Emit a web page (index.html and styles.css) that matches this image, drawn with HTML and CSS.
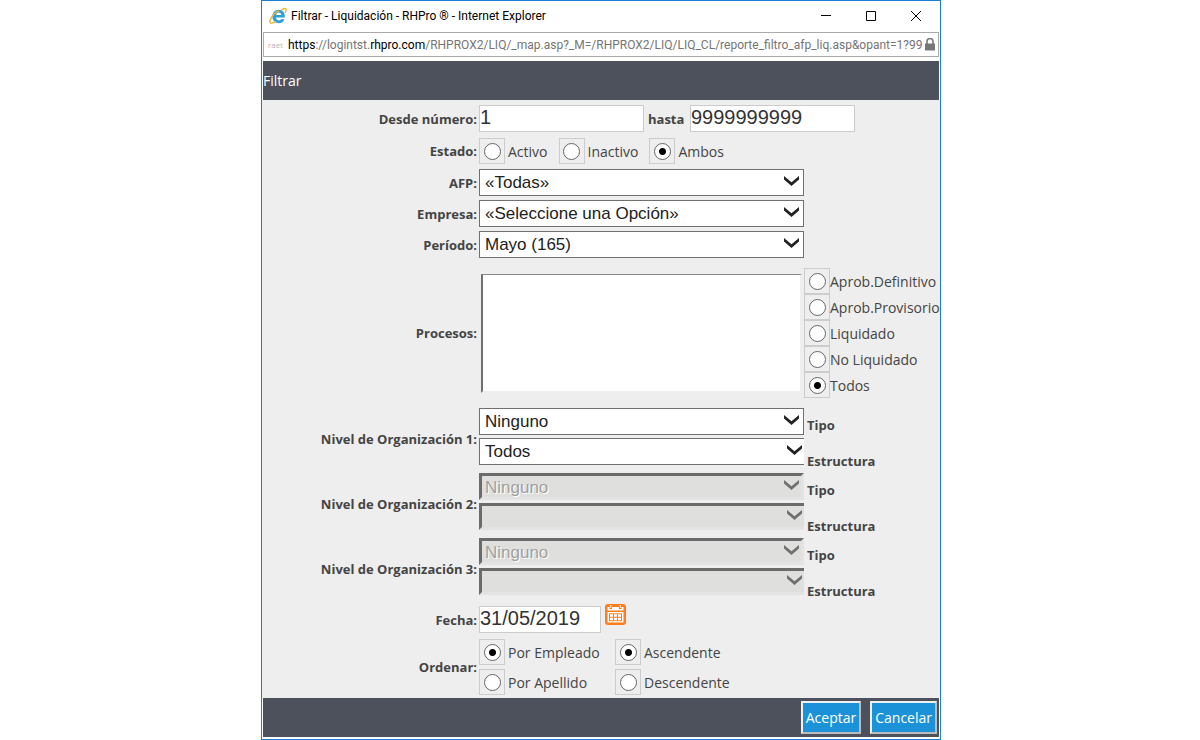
FILE: index.html
```
<!DOCTYPE html>
<html lang="es">
<head>
<meta charset="utf-8">
<title>Filtrar - Liquidación - RHPro</title>
<link rel="stylesheet" href="styles.css">
</head>
<body>
<svg class="defs" aria-hidden="true">
  <symbol id="chevron" viewBox="0 0 15 10"><path d="M0 0 L7.5 6.3 L15 0 V3.6 L7.5 10 L0 3.6 Z" fill="currentColor"/></symbol>
</svg>
<div class="window">
  <header class="titlebar">
    <svg class="ie" viewBox="0 0 18 18" aria-hidden="true">
      <path d="M9.8 2.8 C13.8 2.8 16.2 5.8 15.8 10.6 H7 C7.2 12.4 8.3 13.4 9.9 13.4 C10.9 13.4 11.6 13 12 12.3 H15.5 C14.6 14.8 12.6 16.2 9.8 16.2 C6 16.2 3.4 13.5 3.4 9.6 C3.4 5.6 6 2.8 9.8 2.8 Z" fill="#2f9fe0"/>
      <path d="M7.1 8.1 C7.4 6.5 8.4 5.6 9.8 5.6 C11.2 5.6 12.2 6.6 12.3 8.1 Z" fill="#fff"/>
      <path d="M12.5 3 C15 1.2 17 1 17.1 2.5 C17.2 3.4 16.7 4.6 16 5.6 M10 3.6 C6.5 5.4 2.8 9 1.4 12.4 C0 15.8 1.3 17.6 6.5 14.7" fill="none" stroke="#edb52d" stroke-width="1.4"/>
    </svg>
    <h1 class="caption">Filtrar - Liquidación - RHPro ® - Internet Explorer</h1>
    <button class="wbtn" type="button" aria-label="Minimizar"><svg viewBox="0 0 12 12"><path d="M1 5.5H11"/></svg></button>
    <button class="wbtn" type="button" aria-label="Maximizar"><svg viewBox="0 0 12 12"><path d="M1.5 1.5H10.5V10.5H1.5Z"/></svg></button>
    <button class="wbtn" type="button" aria-label="Cerrar"><svg viewBox="0 0 12 12"><path d="M1 1L11 11M11 1L1 11"/></svg></button>
  </header>
  <div class="address">
    <span class="favicon"><span class="fr">r</span><span class="fa">a</span><span class="fe">e</span><span class="ft">t</span></span>
    <span class="url"><b>https</b>://logintst.<b>rhpro.com</b>/RHPROX2/LIQ/_map.asp?_M=/RHPROX2/LIQ/LIQ_CL/reporte_filtro_afp_liq.asp&amp;opant=1?99</span>
    <svg class="lock" viewBox="0 0 10 13" aria-hidden="true"><path d="M2 6V3.5A3 3 0 0 1 8 3.5V6" fill="none" stroke="#777" stroke-width="1.6"/><path d="M0 5.5H10V12.5H0Z" fill="#777"/></svg>
  </div>
  <h2 class="bar">Filtrar</h2>
  <form class="form">
    <div class="row row-num">
      <label class="name" for="desde">Desde número:</label>
      <div class="line">
        <input class="text" id="desde" type="text" value="1">
        <label class="until" for="hasta">hasta</label>
        <input class="text" id="hasta" type="text" value="9999999999">
      </div>
    </div>
    <div class="row row-state">
      <span class="name">Estado:</span>
      <div class="line states">
        <label class="opt"><input type="radio" name="estado">Activo</label>
        <label class="opt"><input type="radio" name="estado">Inactivo</label>
        <label class="opt"><input type="radio" name="estado" checked>Ambos</label>
      </div>
    </div>
    <div class="row">
      <label class="name" for="afp">AFP:</label>
      <div class="pick"><select id="afp"><option>«Todas»</option></select><svg class="chev"><use href="#chevron"/></svg></div>
    </div>
    <div class="row">
      <label class="name" for="empresa">Empresa:</label>
      <div class="pick"><select id="empresa"><option>«Seleccione una Opción»</option></select><svg class="chev"><use href="#chevron"/></svg></div>
    </div>
    <div class="row">
      <label class="name" for="periodo">Período:</label>
      <div class="pick"><select id="periodo"><option>Mayo (165)</option></select><svg class="chev"><use href="#chevron"/></svg></div>
    </div>
    <div class="row row-proc">
      <label class="name" for="procesos">Procesos:</label>
      <div class="line">
        <select class="list" id="procesos" multiple></select>
        <div class="stack">
          <label class="opt"><input type="radio" name="aprob">Aprob.Definitivo</label>
          <label class="opt"><input type="radio" name="aprob">Aprob.Provisorio</label>
          <label class="opt"><input type="radio" name="aprob">Liquidado</label>
          <label class="opt"><input type="radio" name="aprob">No Liquidado</label>
          <label class="opt"><input type="radio" name="aprob" checked>Todos</label>
        </div>
      </div>
    </div>
    <div class="row row-level">
      <span class="name">Nivel de Organización 1:</span>
      <div class="level">
        <div class="picks">
          <div class="pick"><select id="tipo1"><option>Ninguno</option></select><svg class="chev"><use href="#chevron"/></svg></div>
          <div class="pick cut"><select id="estr1"><option>Todos</option></select><svg class="chev"><use href="#chevron"/></svg></div>
        </div>
        <div class="sides"><label for="tipo1">Tipo</label><label for="estr1">Estructura</label></div>
      </div>
    </div>
    <div class="row row-level">
      <span class="name">Nivel de Organización 2:</span>
      <div class="level">
        <div class="picks">
          <div class="pick"><select id="tipo2" disabled><option>Ninguno</option></select><svg class="chev"><use href="#chevron"/></svg></div>
          <div class="pick cut"><select id="estr2" disabled><option></option></select><svg class="chev"><use href="#chevron"/></svg></div>
        </div>
        <div class="sides"><label for="tipo2">Tipo</label><label for="estr2">Estructura</label></div>
      </div>
    </div>
    <div class="row row-level">
      <span class="name">Nivel de Organización 3:</span>
      <div class="level">
        <div class="picks">
          <div class="pick"><select id="tipo3" disabled><option>Ninguno</option></select><svg class="chev"><use href="#chevron"/></svg></div>
          <div class="pick cut"><select id="estr3" disabled><option></option></select><svg class="chev"><use href="#chevron"/></svg></div>
        </div>
        <div class="sides"><label for="tipo3">Tipo</label><label for="estr3">Estructura</label></div>
      </div>
    </div>
    <div class="row row-date">
      <label class="name" for="fecha">Fecha:</label>
      <div class="line">
        <input class="text date" id="fecha" type="text" value="31/05/2019">
        <button class="cal" type="button" aria-label="Calendario">
          <svg viewBox="0 0 21 21"><rect width="21" height="21" rx="3" fill="#ff7d1a"/><path d="M2.5 3H4.5V5H7V3H14V5H16.5V3H18.5V6.5H2.5Z" fill="#fff"/><path d="M5.75 1V4M15.25 1V4" stroke="#fff" stroke-width=".9"/><path d="M2.5 8H18.5V18.5H2.5Z" fill="#fff"/><path d="M4 9.3H17V17.2H4Z" fill="#ff7d1a"/><path d="M5 10.3h3v2.5H5zM9 10.3h3v2.5H9zM13 10.3h3v2.5h-3zM5 13.8h3v2.5H5zM9 13.8h3v2.5H9zM13 13.8h3v2.5h-3z" fill="#fff"/></svg>
        </button>
      </div>
    </div>
    <div class="row row-order">
      <span class="name">Ordenar:</span>
      <div class="orders">
        <label class="opt"><input type="radio" name="orden" checked>Por Empleado</label>
        <label class="opt"><input type="radio" name="sentido" checked>Ascendente</label>
        <label class="opt"><input type="radio" name="orden">Por Apellido</label>
        <label class="opt"><input type="radio" name="sentido">Descendente</label>
      </div>
    </div>
  </form>
  <footer class="actions">
    <button class="action" type="button">Aceptar</button>
    <button class="action" type="button">Cancelar</button>
  </footer>
</div>
</body>
</html>
```
FILE: styles.css
```
* { box-sizing: border-box; }
body { margin: 0; padding-left: 2px; background: #fff; font-family: "Open Sans", "Noto Sans", sans-serif; font-size: 14px; color: #444; }
h1, h2 { margin: 0; font-weight: 400; }
button { font-family: inherit; cursor: pointer; }
.defs { position: absolute; width: 0; height: 0; }
.window { display: flex; flex-direction: column; max-width: 680px; min-height: 100vh; margin: 0 auto; border: 1px solid #1a7fd4; background: #fff; }

.titlebar { display: flex; align-items: center; height: 29px; padding: 0 2px 0 7px; }
.ie { width: 18px; height: 18px; margin-right: 4px; }
.caption { flex: 1; font-family: Roboto, sans-serif; font-size: 12px; color: #000; white-space: nowrap; }
.wbtn { display: flex; align-items: center; justify-content: center; width: 45px; height: 28px; padding: 0; border: 0; background: none; }
.wbtn svg { width: 12px; height: 12px; fill: none; stroke: #000; }

.address { display: flex; align-items: center; height: 25px; margin: 2px 1px 0; padding: 0 3px 0 4px; border: 1px solid #aaa; }
.favicon { width: 20px; font-size: 8px; line-height: 12px; }
.fr { color: #e4a0a8; }
.fa { color: #c8a0c8; }
.fe { color: #90c8a8; }
.ft { color: #e0b0a0; }
.url { flex: 1; overflow: hidden; white-space: nowrap; font-family: Roboto, sans-serif; font-size: 12px; color: #757575; }
.url b { font-weight: 400; color: #000; }
.lock { flex: none; width: 10px; height: 13px; margin-left: 2px; }

.bar { height: 39px; margin: 4px 1px 0; line-height: 39px; background: #4d515c; color: #fff; font-size: 14px; }

.form { flex: 1; display: flex; flex-direction: column; padding: 5px 0 2px; background: #eee; }
.row { display: grid; grid-template-columns: 215px 1fr; column-gap: 2px; align-items: center; margin-bottom: 4px; }
.row-num { margin-bottom: 6px; }
.row-state { margin-bottom: 5px; }
.row-proc { margin: 6px 0 10px; }
.row-level { margin-bottom: 2px; }
.row-date { margin: 3px 0 6px; }
.row-order { margin-bottom: 0; }
.name { text-align: right; font-size: 13px; font-weight: 700; }
.row-level .name { padding-bottom: 2px; }
.line { display: flex; align-items: center; }

.text { width: 165px; height: 27px; padding: 0 0 2px; border: 1px solid #ccc; background: #fff; color: #333; font: 20px "Liberation Sans", sans-serif; }
.until { width: 46px; padding-left: 4px; font-size: 13px; font-weight: 700; }
.date { width: 122px; }
.cal { align-self: flex-start; width: 21px; height: 21px; margin: -2px 0 0 4px; padding: 0; border: 0; background: none; }
.cal svg { display: block; }

.opt { display: flex; align-items: center; gap: 3px; height: 26px; }
.opt input { appearance: none; display: grid; place-items: center; flex: none; width: 26px; height: 26px; margin: 0; border: 1px solid #ccc; }
.opt input::before { content: ""; width: 15px; height: 15px; border: 1px solid #666; border-radius: 50%; background: #fff; }
.opt input:checked::before { background: radial-gradient(circle, #000 3px, #fff 4px); }
.states { gap: 11px; }
.stack { margin-left: 2px; }
.stack .opt { gap: 0; }
.orders { display: grid; grid-template-columns: 136px 1fr; row-gap: 4px; }

.pick { position: relative; width: 325px; height: 27px; }
.pick select { appearance: none; width: 100%; height: 100%; padding: 0 5px; border: 1px solid #707070; border-radius: 0; background: #fff; color: #222; font: 17px "Liberation Sans", sans-serif; }
.chev { position: absolute; top: 7px; right: 5px; width: 15px; height: 10px; color: #222; pointer-events: none; }
.cut .chev { right: 2px; }
.cut select { border-right: 0; }
.pick select:disabled { padding: 2px 3px 0; border: 3px solid; border-color: #6b6b6b #e3e3e3 #e3e3e3 #6b6b6b; background: #dfdfde; color: #a0a0a0; opacity: 1; text-shadow: 1px 1px 0 #fff; }
.cut select:disabled { border-right: 0; }
select:disabled + .chev { color: #707070; }
.list { width: 321px; height: 119px; margin-left: 2px; padding: 0; border: 2px solid; border-top-width: 1px; border-color: #888 #eee #eee #707070; border-radius: 0; background: #fff; }
.level { display: flex; }
.picks { display: flex; flex-direction: column; gap: 3px; }
.sides { display: flex; flex-direction: column; gap: 16px; padding: 7px 0 0 3px; font-size: 13px; font-weight: 700; line-height: 20px; }

.actions { display: flex; align-items: center; justify-content: flex-end; gap: 9px; height: 39px; margin: 0 1px 2px; padding-right: 2px; background: #4d515c; }
.action { height: 33px; padding: 0 3px; border: 2px solid; border-color: #f0f0f0 #bbb #bbb #f0f0f0; background: #1b92d8; color: #fff; font-size: 14px; }
```
